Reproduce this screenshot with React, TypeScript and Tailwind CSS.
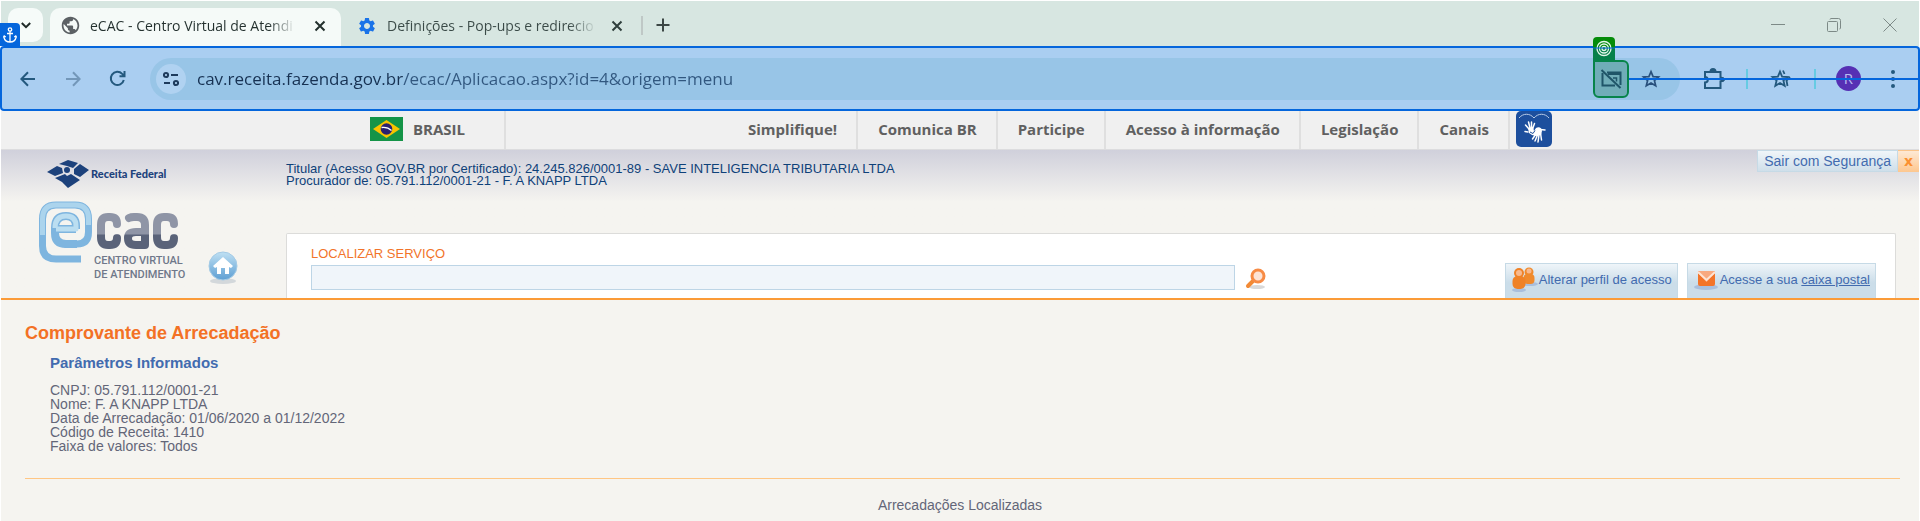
import React from "react";
import { MdPublic, MdSettings } from "react-icons/md";

const navItems = ["Simplifique!", "Comunica BR", "Participe", "Acesso à informação", "Legislação", "Canais"];

const params = [
  "CNPJ: 05.791.112/0001-21",
  "Nome: F. A KNAPP LTDA",
  "Data de Arrecadação: 01/06/2020 a 01/12/2022",
  "Código de Receita: 1410",
  "Faixa de valores: Todos",
];

function CloseIcon() {
  return (
    <svg width="12" height="12" viewBox="0 0 12 12" fill="none" stroke="currentColor" strokeWidth="2">
      <path d="M1.5 1.5l9 9M10.5 1.5l-9 9" />
    </svg>
  );
}

function TabStrip() {
  return (
    <div className="flex h-[45px] items-start bg-[#d7e6e1] pt-[7px] pl-[7px]">
      <button aria-label="Pesquisar guias" className="flex h-[34px] w-[35px] items-center justify-center rounded-[10px] bg-[#f6fbf9] text-[#1f2a28]">
        <svg width="10" height="7" viewBox="0 0 10 7" fill="none" stroke="currentColor" strokeWidth="2">
          <path d="M.8 1l4.2 4.200L9.200 1" />
        </svg>
      </button>
      <div className="ml-[7px] flex h-[38px] w-[291px] items-center rounded-t-[10px] bg-[#f5faf8] pr-[15px] pb-[3px] pl-[10px] text-[#23302e]">
        <MdPublic className="h-[21px] w-[21px] shrink-0 text-[#5c6165]" />
        <span className="ml-[9px] bg-gradient-to-r from-[#23302e] from-88% to-[#23302e]/10 bg-clip-text text-[14px] whitespace-nowrap text-transparent">
          eCAC - Centro Virtual de Atendi
        </span>
        <button aria-label="Fechar guia" className="ml-auto"><CloseIcon /></button>
      </div>
      <div className="flex h-[38px] w-[300px] items-center border-r-2 border-transparent pr-[16px] pb-[3px] pl-[16px] text-[#2f3f3c]">
        <MdSettings className="h-[20px] w-[20px] shrink-0 text-[#1a73e8]" />
        <span className="ml-[10px] bg-gradient-to-r from-[#3a4a47] from-88% to-[#3a4a47]/10 bg-clip-text text-[14px] whitespace-nowrap text-transparent">
          Definições - Pop-ups e redirecio
        </span>
        <button aria-label="Fechar guia" className="ml-auto"><CloseIcon /></button>
      </div>
      <div className="mt-[8px] h-[19px] w-[2px] bg-[#bfc8c6]" />
      <button aria-label="Nova guia" className="mt-[10px] ml-[13px] text-[#3c4745]">
        <svg width="14" height="14" viewBox="0 0 14 14" stroke="currentColor" strokeWidth="2"><path d="M7 .5v13M.5 7h13" /></svg>
      </button>
      <div className="mt-[10px] mr-[22px] ml-auto flex items-center gap-[42px] text-[#7d8a87]">
        <button aria-label="Minimizar" className="h-[14px]">
          <svg width="14" height="14" viewBox="0 0 14 14" stroke="currentColor"><path d="M0 6.500h14" /></svg>
        </button>
        <button aria-label="Restaurar">
          <svg width="14" height="14" viewBox="0 0 14 14" fill="none" stroke="currentColor">
            <rect x=".5" y="3.500" width="10" height="10" rx="1" /><path d="M3 1.500c0-.6.500-1 1-1h7.500a2 2 0 0 1 2 2V10c0 .6-.4 1-1 1" />
          </svg>
        </button>
        <button aria-label="Fechar">
          <svg width="14" height="14" viewBox="0 0 14 14" stroke="currentColor"><path d="M.5 .5l13 13M13.500 .5l-13 13" /></svg>
        </button>
      </div>
    </div>
  );
}

function StarPath() {
  return <path d="M10 2.600l2.100 5 5.400.4-4.100 3.500 1.300 5.300L10 14l-4.700 2.800 1.300-5.300L2.500 8l5.400-.4z" />;
}

function Toolbar() {
  return (
    <div className="relative -mx-px flex h-[65px] items-center rounded-[4px] border-2 border-[#0566dc] bg-[#aacef1] px-[18px] text-[#24597e]">
      <button aria-label="Voltar">
        <svg width="16" height="16" viewBox="0 0 16 16" fill="none" stroke="currentColor" strokeWidth="2"><path d="M15 8H2M8 1.200L1.400 8 8 14.800" /></svg>
      </button>
      <button aria-label="Avançar" className="ml-[29px] text-[#7397b9]">
        <svg width="16" height="16" viewBox="0 0 16 16" fill="none" stroke="currentColor" strokeWidth="2"><path d="M1 8h13M8 1.200L14.600 8 8 14.800" /></svg>
      </button>
      <button aria-label="Recarregar" className="ml-[28px]">
        <svg width="17" height="17" viewBox="0 0 17 17" fill="none" stroke="currentColor" strokeWidth="2">
          <path d="M14.800 10A6.600 6.600 0 1 1 13.200 3.900L15.500 6M15.500 1v5.200h-5" />
        </svg>
      </button>
      <div className="ml-[24px] flex h-[42px] flex-1 items-center rounded-full bg-[#98c5e7] px-[6px]">
        <button aria-label="Ver informações do site" className="flex h-[30px] w-[30px] items-center justify-center rounded-full bg-[#b0d2f1] text-[#1e3b5c]">
          <svg width="16" height="16" viewBox="0 0 16 16" fill="none" stroke="currentColor" strokeWidth="2">
            <circle cx="3" cy="4" r="2.100" /><path d="M8 4h7M1 12h6" /><circle cx="13" cy="12" r="2.100" />
          </svg>
        </button>
        <input
          aria-label="Endereço"
          defaultValue="cav.receita.fazenda.gov.br/ecac/Aplicacao.aspx?id=4&origem=menu"
          className="mr-4 ml-[11px] h-[30px] min-w-0 flex-1 bg-[linear-gradient(90deg,#163152_206px,#31577f_206px)] bg-clip-text text-[17px] text-transparent outline-none"
        />
        <div className="relative flex h-[38px] w-[36px] items-center justify-center rounded-[6px] rounded-tl-none border-2 border-[#07844a] bg-[#70adb8]">
          <div className="absolute -top-[25px] -left-[2px] h-[23px] w-[22px] rounded-t-[4px] bg-gradient-to-b from-[#058c0a] from-45% to-[#06804a] to-50%">
            <svg width="22" height="23" viewBox="0 0 22 23" fill="none" stroke="#e4f5ea" strokeWidth="1.300">
              <circle cx="11" cy="11.500" r="7" /><circle cx="11" cy="11.500" r="4.500" /><circle cx="11" cy="11.500" r="2" />
              <path d="M0 11h22" stroke="#0566dc" strokeWidth="2" strokeOpacity=".5" />
            </svg>
          </div>
          <button aria-label="Pop-ups bloqueados" className="text-[#1f5568]">
            <svg width="22" height="20" viewBox="0 0 22 20" fill="none" stroke="currentColor" strokeWidth="2">
              <path d="M7 3.500h13.500V16M2.500 4v12.500H15" /><path d="M8 5h12" /><path d="M13 9h3.500v3.500" strokeWidth="1.500" /><path d="M1.500 1l19 18" />
            </svg>
          </button>
        </div>
        <button aria-label="Adicionar aos favoritos" className="mr-[13px] ml-[12px] text-[#29507c]">
          <svg width="20" height="20" viewBox="0 0 20 20" fill="none" stroke="currentColor" strokeWidth="1.700"><StarPath /></svg>
        </button>
      </div>
      <button aria-label="Extensões" className="ml-[23px]">
        <svg width="22" height="22" viewBox="0 0 22 22" fill="none" stroke="currentColor" strokeWidth="2">
          <path d="M2 4h15.500v5.500a2 2 0 0 1 0 4V20H2v-5.500a2.800 2.800 0 0 0 0-5.600z" /><path d="M7.500 3.500a2.500 2.500 0 0 1 5 0z" fill="currentColor" /><path d="M18 9.500h1.500a2 2 0 0 1 0 4H18z" fill="currentColor" strokeWidth="1" />
        </svg>
      </button>
      <div className="ml-[21px] h-[20px] w-[2px] bg-[#66cbe3]" />
      <button aria-label="Favoritos" className="ml-[22px]">
        <svg width="22" height="20" viewBox="0 0 22 20" fill="none" stroke="currentColor" strokeWidth="1.800"><StarPath /><path d="M13 1.500l1.500 3.500M20 8l-3.500 3.500 1 5.500" /></svg>
      </button>
      <div className="ml-[22px] h-[20px] w-[2px] bg-[#66cbe3]" />
      <button className="ml-[20px] h-[25px] w-[25px] rounded-full bg-[#5630b4] text-[15px] leading-[25px] text-[#b8bdf0]">R</button>
      <button aria-label="Menu" className="mr-[1px] ml-[26px]">
        <svg width="12" height="18" viewBox="0 0 12 18" fill="currentColor"><circle cx="6" cy="2" r="2" /><circle cx="6" cy="9" r="2" /><circle cx="6" cy="16" r="2" /></svg>
      </button>
      <div className="absolute top-[30px] right-0 h-[2px] w-[289px] bg-[#0566dc]" />
      <div className="absolute -top-[25px] -left-[2px] flex h-[23px] w-[20px] items-center justify-center rounded-tr-[4px] bg-[#0566dc]">
        <svg width="14" height="16" viewBox="0 0 14 16" fill="none" stroke="#fff" strokeWidth="1.300">
          <circle cx="7" cy="2.500" r="1.700" /><path d="M7 4.200V15M4 6.500h6M1 9v1.500C1.500 13 4 15 7 15s5.500-2 6-4.500V9M.2 10.500L1.200 9l1.600 1M13.800 10.500L12.800 9l-1.600 1" />
        </svg>
      </div>
    </div>
  );
}

function GovBar() {
  return (
    <div className="h-[39px] border-b border-[#dcdcde] bg-[#f0f0f0] pr-4 pl-[18px]">
      <nav className="mx-auto flex h-[38px] max-w-[1182px] items-stretch font-['Open_Sans',sans-serif] text-[15px] font-bold text-[#606060]">
        <a href="#brasil" className="flex w-[136px] items-center gap-[10px] border-r-2 border-[#dfdfdf] pb-[2px]">
          <svg width="33" height="24" viewBox="0 0 33 24">
            <path fill="#159447" d="M0 0h33v24H0z" /><path fill="#f8c300" d="M16.500 3L30 12 16.500 21 3 12z" /><circle cx="16.500" cy="12" r="5.800" fill="#2b2070" />
            <path d="M11.500 10.500c4-.6 7.500.6 10 3" fill="none" stroke="#fff" strokeWidth="1.300" />
          </svg>
          BRASIL
        </a>
        <div className="ml-auto flex">
          {navItems.map((item) => (
            <a key={item} href="#menu" className="flex items-center border-r-2 border-[#dfdfdf] pr-[19px] pb-[2px] pl-[20px] whitespace-nowrap">{item}</a>
          ))}
        </div>
        <a href="#libras" aria-label="Libras" className="ml-[6px]">
          <svg width="36" height="36" viewBox="0 0 36 36">
            <rect width="36" height="36" rx="5" fill="#1d4f9d" />
            <path d="M3 7c4-5 11-5 15 0 4-5 11-5 15 0" fill="none" stroke="#b9cce8" />
            <g fill="none" stroke="#fff" strokeLinecap="round" strokeWidth="1.500">
              <path d="M13 18l-3.500-4M14 17l-1.500-6M15.500 17V11M16.500 18l2-5.500M12 21l-3-.5" />
              <path d="M24 18.500l5 .5M20 23l-3.500 5M21.500 24l-2.500 6M23 24l-1 7M24.500 22l1 7" />
            </g>
            <path d="M12 17l5-1 1 4 2-3c3-2 6 0 6 3l-1 4-5 1-4-1-3-2z" fill="#fff" />
            <path d="M14 21l3 1.500 2-3" fill="none" stroke="#1d4f9d" />
          </svg>
        </a>
      </nav>
    </div>
  );
}

function BrandLogo() {
  return (
    <svg width="150" height="126" viewBox="0 0 150 126" className="shrink-0">
      <g fill="#1d427c">
        <path d="M10 17l10-6 5 2 1 5-8 3zM22 9l9-4 10 3-5 5-6-2zM37 14l6-5 9 6-9 7-6-3zM18 23l10-4 2 2 4-2 9 6-12 8-6-6z" />
        <circle cx="30" cy="15" r="3" />
      </g>
      <text x="54" y="23" fontFamily="Lato, sans-serif" fontWeight="900" fontSize="11" fill="#1d427c">Receita Federal</text>
      <g fill="none" strokeLinejoin="round">
        <path d="M44 104H19Q5.500 104 5.500 91V64Q5.500 50 19 50H38Q51.500 50 51.500 64V77Q51.500 89 40 89H27" stroke="#7eb5df" strokeWidth="7" />
        <path d="M5.500 80V64Q5.500 50 19 50H38Q51.500 50 51.500 64V70" stroke="#abd4ed" strokeWidth="5" />
        <path d="M39 74H19M39 74V71Q39 61 29 61 18 61 18 73V78Q18 89 29 89H40" stroke="#7eb5df" strokeWidth="8" />
        <path d="M19 74H39V71Q39 61 29 61 18 61 18 73" stroke="#bbdef1" strokeWidth="5" />
      </g>
      <defs><linearGradient id="cac" x1="0" y1="0" x2="0" y2="1"><stop offset=".6" stopColor="#8f95a6" /><stop offset=".65" stopColor="#5a6379" /></linearGradient></defs>
      <g fill="none" stroke="url(#cac)" strokeWidth="8" strokeLinejoin="round" strokeLinecap="round">
        <path d="M80 69q0-7-7-7h-2q-7 0-7 8v12q0 8 7 8h2q7 0 7-7" />
        <path d="M92 63q2-1 5-1h3q8 0 8 8v20h-9q-8 0-8-7 0-6 8-6h9" />
        <path d="M137 69q0-7-7-7h-3q-7 0-7 8v12q0 8 7 8h3q7 0 7-7" />
      </g>
      <g fontFamily="Roboto, sans-serif" fontWeight="500" fontSize="11" fill="#6f788a">
        <text x="57" y="109">CENTRO VIRTUAL</text>
        <text x="57" y="123">DE ATENDIMENTO</text>
      </g>
    </svg>
  );
}

function HomeIcon() {
  return (
    <svg width="30" height="34" viewBox="0 0 30 34">
      <defs><linearGradient id="home" x1="0" y1="0" x2="0" y2="1"><stop stopColor="#bfe0f3" /><stop offset="1" stopColor="#5e9fd3" /></linearGradient></defs>
      <ellipse cx="15" cy="30" rx="13" ry="3" fill="#d3d8db" />
      <circle cx="15" cy="15" r="14" fill="url(#home)" stroke="#a4cbe6" />
      <path d="M15 6L5 15l2 2 2-1v7h4v-6h4v6h4v-7l2 1 2-2z" fill="#fff" />
    </svg>
  );
}

const action = "flex h-[35px] items-center border border-b-0 border-[#c6dae6] bg-gradient-to-b from-[#eff5f9] to-[#cbdde9] to-55% pr-[5px] pb-[2px] text-[13px] whitespace-nowrap text-[#426baf]";

function Header() {
  return (
    <header className="relative flex h-[150px] border-b-2 border-[#fb9b38] bg-gradient-to-b from-[#d0d0db] to-[#f5f4f0] to-35%">
      <div className="flex w-[285px] shrink-0 items-start pt-[5px] pl-[36px]">
        <BrandLogo />
        <a href="#inicio" aria-label="Início" className="mt-[96px] ml-[21px]"><HomeIcon /></a>
      </div>
      <div className="mr-[23px] flex flex-1 flex-col">
        <p className="pt-[13px] text-[13px] leading-[12px] text-[#0e4179]">
          Titular (Acesso GOV.BR por Certificado): 24.245.826/0001-89 - SAVE INTELIGENCIA TRIBUTARIA LTDA
          <br />
          Procurador de: 05.791.112/0001-21 - F. A KNAPP LTDA
        </p>
        <div className="mt-auto flex h-[65px] items-end rounded-t-[2px] border border-b-0 border-[#dcdcda] bg-white pr-[19px] pl-[24px]">
          <form className="flex flex-1 items-end pb-[8px]">
            <div className="mr-[10px] max-w-[924px] flex-1">
              <label htmlFor="servico" className="block text-[13px] leading-[22px] text-[#f2742a]">LOCALIZAR SERVIÇO</label>
              <input id="servico" className="block h-[25px] w-full border border-[#bdd5e6] bg-[#f0f5fa] px-2 text-[13px] outline-none" />
            </div>
            <button type="button" aria-label="Localizar">
              <svg width="22" height="22" viewBox="0 0 22 22">
                <ellipse cx="12" cy="19" rx="8" ry="2" fill="#d9d9d9" />
                <path d="M8 13l-5 5" stroke="#f28a35" strokeWidth="4" strokeLinecap="round" /><circle cx="13" cy="8" r="6" fill="#fde3d6" stroke="#f78b45" strokeWidth="3" />
              </svg>
            </button>
          </form>
          <button className={action + " pl-[5px]"}>
            <svg width="27" height="26" viewBox="0 0 27 26" className="mr-[1px]">
              <ellipse cx="19" cy="17" rx="8" ry="2" fill="#a9bfdd" /><ellipse cx="8" cy="23" rx="7" ry="2" fill="#a9bfdd" />
              <g fill="#f08a2c"><circle cx="18" cy="5" r="4.500" /><rect x="12.500" y="7" width="11" height="10" rx="4" /></g>
              <g fill="#ef8227"><circle cx="8" cy="6" r="5" /><rect x="1.500" y="9" width="13" height="13" rx="5" /></g>
              <circle cx="8" cy="6" r="3" fill="#f8b98d" /><circle cx="18" cy="4" r="2.500" fill="#f8b98d" />
            </svg>
            Alterar perfil de acesso
          </button>
          <a href="#caixa" className={action + " ml-[9px] pl-[5px]"}>
            <svg width="26" height="22" viewBox="0 0 26 22" className="mr-[1px]">
              <ellipse cx="13" cy="18" rx="12" ry="3" fill="#a9bfdd" /><rect x="5" y="2" width="17" height="15" rx="2" fill="#f37429" />
              <path d="M5 4l8.500 9L22 4V2H5z" fill="#f8a97f" /><path d="M5 3l8.500 8L22 3" fill="none" stroke="#fde3d3" strokeWidth="2" />
            </svg>
            <span>Acesse a sua <u>caixa postal</u></span>
          </a>
        </div>
      </div>
      <div className="absolute top-0 right-0 flex h-[22px] text-[14px]">
        <button className="border border-[#c6dae6] bg-gradient-to-b from-[#f0f5f9] to-[#cfdfea] px-[6px] leading-[18px] text-[#426baf]">Sair com Segurança</button>
        <button aria-label="Sair" className="w-[21px] border-t border-[#fac48a] bg-gradient-to-b from-[#fee9d4] to-[#fdc78f] font-['DejaVu_Sans',sans-serif] leading-[19px] font-bold text-[#fb9030]">x</button>
      </div>
    </header>
  );
}

export default function App() {
  return (
    <div className="min-h-screen overflow-x-hidden bg-white px-px pt-px">
      <div className="font-['Open_Sans',sans-serif]">
        <TabStrip />
        <Toolbar />
      </div>
      <GovBar />
      <div className="bg-[#f5f4f0] font-['Liberation_Sans',Arial,sans-serif]">
        <Header />
        <main className="px-[24px] pt-[22px] text-[14px] text-[#636678]">
          <h1 className="text-[18px] leading-[22px] font-bold text-[#f37125]">Comprovante de Arrecadação</h1>
          <section className="pl-[25px]">
            <h2 className="mt-[9px] text-[15px] leading-[20px] font-bold text-[#426baf]">Parâmetros Informados</h2>
            <div className="mt-[10px] leading-[14px]">
              {params.map((line) => <p key={line}>{line}</p>)}
            </div>
          </section>
          <hr className="mt-[25px] mr-[-5px] border-[#ffc684]" />
          <p className="py-[16px] text-center leading-[20px]">Arrecadações Localizadas</p>
        </main>
      </div>
    </div>
  );
}
